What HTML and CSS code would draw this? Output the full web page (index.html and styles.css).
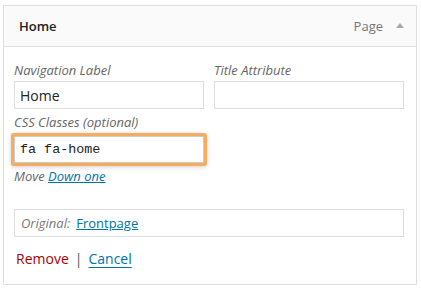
FILE: index.html
```html
<!DOCTYPE html>
<html lang="en">
<head>
    <meta charset="UTF-8">
    <title>Menu item</title>
    <link rel="stylesheet" href="styles.css">
</head>
<body>

<div class="menu-item">
    <div class="item-bar">
        <span class="item-title">Home</span>
        <span class="item-controls">
            <span class="item-type">Page</span>
            <span class="item-arrow"></span>
        </span>
    </div>

    <div class="item-settings">
        <div class="row">
            <label class="field">
                <span class="label">Navigation Label</span>
                <input type="text" value="Home">
            </label>
            <label class="field">
                <span class="label">Title Attribute</span>
                <input type="text" value="">
            </label>
        </div>

        <label class="field">
            <span class="label">CSS Classes (optional)</span>
            <input type="text" class="focused mono" value="fa fa-home">
        </label>

        <p class="move">Move <a href="#">Down one</a></p>

        <div class="original">
            <span class="original-label">Original:</span>
            <a href="#">Frontpage</a>
        </div>

        <div class="actions">
            <a href="#" class="remove">Remove</a>
            <span class="sep">|</span>
            <a href="#" class="cancel">Cancel</a>
        </div>
    </div>
</div>

</body>
</html>
```

FILE: styles.css
```css
body {
    margin: 0;
    background: #fff;
    font-family: "Open Sans", sans-serif;
    font-size: 13px;
    color: #333;
}

.menu-item {
    width: 412px;
    margin: 5px 0 0 3px;
    border: 1px solid #dfdfdf;
    height: 278px;
}

.item-bar {
    display: flex;
    justify-content: space-between;
    align-items: center;
    height: 40px;
    padding: 0 12px 0 15px;
    background: #fafafa;
    border-bottom: 1px solid #dfdfdf;
}

.item-title {
    font-weight: 600;
    color: #222;
}

.item-controls {
    display: flex;
    align-items: center;
    gap: 13px;
}

.item-type {
    color: #777;
}

.item-arrow {
    width: 0;
    height: 0;
    border-left: 4px solid transparent;
    border-right: 4px solid transparent;
    border-bottom: 5px solid #aaa;
    margin-top: -1px;
}

.item-settings {
    padding: 14px 12px 0 10px;
}

.row {
    display: flex;
    gap: 10px;
}

.field {
    display: block;
    width: 190px;
}

.label {
    display: block;
    font-style: italic;
    color: #666;
    line-height: 19px;
}

input {
    display: block;
    box-sizing: border-box;
    width: 190px;
    height: 28px;
    margin: 1px 0 0;
    padding: 3px 5px;
    border: 1px solid #ddd;
    font-family: "Open Sans", sans-serif;
    font-size: 14px;
    color: #222;
    outline: none;
}

.row + .field {
    margin-top: 5px;
}

.row + .field .label {
    line-height: 17px;
}

.focused {
    height: 27px;
    margin-top: 5px;
    box-shadow: 0 0 0 3px #f6ac5c, 0 1px 5px 3px rgba(0, 0, 0, 0.18);
    border-radius: 1px;
    border-color: #ccc;
}

.mono {
    font-family: "Liberation Mono", monospace;
    font-size: 13.4px;
}

.move {
    margin: 4px 0 0;
    font-style: italic;
    color: #666;
    line-height: 18px;
}

a {
    color: #0073aa;
}

.original {
    margin-top: 24px;
    width: 390px;
    box-sizing: border-box;
    height: 28px;
    border: 1px solid #ddd;
    padding: 0 6px;
    display: flex;
    align-items: center;
    gap: 6px;
}

.original-label {
    font-style: italic;
    color: #777;
}

.actions {
    margin-top: 12px;
    display: flex;
    gap: 6px;
    padding-left: 2px;
    font-size: 14px;
}

.remove {
    color: #a00;
    text-decoration: none;
}

.sep {
    color: #555;
}

.cancel {
    text-underline-offset: 3px;
}
```
